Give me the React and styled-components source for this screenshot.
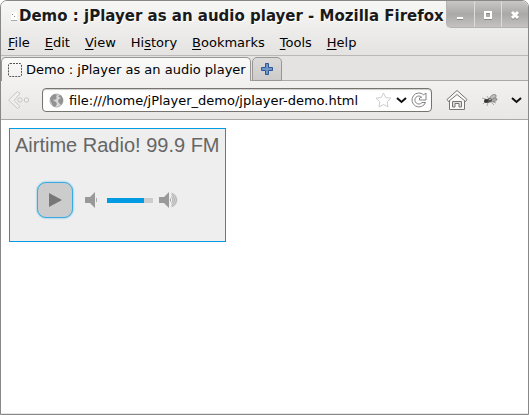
import React, { useState } from "react";
import styled, { createGlobalStyle } from "styled-components";

const GlobalStyle = createGlobalStyle`
  *, *::before, *::after { box-sizing: border-box; }
  body { margin: 0; background: #fff; }
  button, input { font: inherit; color: inherit; margin: 0; padding: 0; border: 0; background: none; }
  svg { display: block; }
`;

const Window = styled.div`
  display: flex;
  flex-direction: column;
  min-height: 100vh;
  border: 1px solid #888;
  border-radius: 7px 7px 0 0;
  overflow: hidden;
  background: #fff;
  color: #000;
  font: 13px/18px "DejaVu Sans", sans-serif;
`;

const Chrome = styled.header`
  background: linear-gradient(#f7f7f6, #e4e3e1);
  border-bottom: 1px solid #b9b8b6;
`;

const TitleBar = styled.div`
  display: flex;
  height: 30px;
`;

const WindowTitle = styled.h1`
  display: flex;
  align-items: center;
  flex: 1;
  min-width: 0;
  margin: 0;
  padding-left: 10px;
  gap: 2px;
  font-size: 15px;
  font-weight: bold;
  color: #1a1a1a;
  white-space: nowrap;
  text-shadow: 1px 1px 0 #fff;
`;

const WindowControls = styled.div`
  display: flex;
  flex: none;
  height: 27px;
  border: 1px solid #b4b3b1;
  border-width: 0 0 1px 1px;
  border-radius: 0 0 0 5px;
  overflow: hidden;
  background: linear-gradient(#c8c7c6, #aaa9a8 50%, #c3c2c1);
`;

const ControlButton = styled.button`
  display: grid;
  place-items: center;
  width: 27px;
  padding: 2px 1px 0 0;
  border-left: 1px solid #dddcdb;
  &:first-child { border-left: 0; padding-right: 2px; }
`;

const MenuBar = styled.nav`
  display: flex;
  align-items: center;
  gap: 15px;
  height: 24px;
  padding-left: 7px;
`;

const MenuButton = styled.button`
  white-space: nowrap;
  u { text-underline-offset: 2px; }
`;

const TabStrip = styled.div`
  display: flex;
  align-items: flex-end;
  gap: 1px;
  height: 25px;
  background: #e4e3e1;
  box-shadow: inset 0 -1px #aaa9a7;
`;

const Tab = styled.button`
  display: flex;
  align-items: center;
  gap: 4px;
  height: 24px;
  padding: 0 4px 0 6px;
  border: 1px solid #999795;
  border-bottom: 0;
  border-radius: 5px 5px 0 0;
  background: linear-gradient(#fafafa, #f2f1f0);
  white-space: nowrap;
`;

const NewTab = styled.button`
  display: grid;
  place-items: center;
  width: 30px;
  height: 24px;
  border: 1px solid #999795;
  border-radius: 5px 5px 0 0;
  background: linear-gradient(#dcdbda, #cccbca);
`;

const NavBar = styled.div`
  display: flex;
  align-items: center;
  height: 39px;
  padding: 0 6px;
  border-bottom: 1px solid #aca7a2;
  background: linear-gradient(#f2f1f0, #e8e7e6);
`;

const IconButton = styled.button`
  display: grid;
  place-items: center;
  flex: none;
  width: ${(p) => p.$width}px;
  height: 24px;
`;

const AddressBar = styled.div`
  display: flex;
  align-items: center;
  flex: 1;
  min-width: 0;
  height: 24px;
  margin: 0 12px 0 11px;
  padding: 0 3px 0 6px;
  border: 1px solid #77736f;
  border-radius: 4px;
  background: #fff;
  box-shadow: inset 0 1px 1px #ccc;
`;

const Address = styled.input`
  flex: 1;
  min-width: 0;
  height: 20px;
  padding-left: 5px;
  outline: 0;
`;

const Page = styled.main`
  flex: 1;
  display: flex;
  align-items: flex-start;
  padding: 8px;
  background: #fff;
  border-bottom: 1px solid #e6e5e4;
`;

const Player = styled.section`
  min-width: 217px;
  height: 114px;
  border: 1px solid #009be3;
  background: #eee;
  color: #666;
  font-family: "Liberation Sans", Arial, sans-serif;
`;

const Station = styled.h2`
  margin: 0;
  padding: 4px 5px 0;
  font-size: 20px;
  font-weight: normal;
  line-height: 25px;
  white-space: nowrap;
`;

const PlayerControls = styled.div`
  display: flex;
  align-items: center;
  padding: 24px 0 0 27px;
`;

const PlayButton = styled.button`
  display: grid;
  place-items: center;
  width: 36px;
  height: 36px;
  margin-right: 12px;
  border: 1px solid #39ace6;
  border-radius: 9px;
  background: #ccc;
  box-shadow: 0 0 2px #39ace6;
`;

const VolumeSlider = styled.input`
  appearance: none;
  width: 46px;
  height: 5px;
  margin: 0 6px 0 10px;
  background: linear-gradient(to right, #009be3 ${(p) => p.$level}%, #ccc ${(p) => p.$level}%);
  &::-webkit-slider-thumb { appearance: none; width: 1px; height: 5px; }
`;

const menus = [
  ["", "F", "ile"],
  ["", "E", "dit"],
  ["", "V", "iew"],
  ["Hi", "s", "tory"],
  ["", "B", "ookmarks"],
  ["", "T", "ools"],
  ["", "H", "elp"],
];

const DocumentIcon = () => (
  <svg width="6" height="9" viewBox="0 0 6 9" aria-hidden="true">
    <path d="M0 0h6v9H0z" fill="#fff" />
    <path d="M1 2h1v1H1zM3 4h1v1H3z" fill="#888" />
    <path d="M0 8h6v1H0z" fill="#aaa" />
  </svg>
);

const MinimizeIcon = () => (
  <svg width="10" height="10" viewBox="0 0 10 10" aria-hidden="true">
    <path d="M2 9.5h6" stroke="#888" />
    <path d="M2 8h6" stroke="#fff" strokeWidth="2" />
  </svg>
);

const MaximizeIcon = () => (
  <svg width="10" height="10" viewBox="0 0 10 10" fill="none" aria-hidden="true">
    <path d="M2 3h6v6H2z" stroke="#8b8a89" strokeWidth="2" />
    <path d="M2 2h6v6H2z" stroke="#fff" strokeWidth="2" />
  </svg>
);

const CloseIcon = () => (
  <svg width="10" height="10" viewBox="0 0 10 10" fill="none" aria-hidden="true">
    <path d="m2 3 6 6m0-6L2 9" stroke="#8b8a89" strokeWidth="3" />
    <path d="m2 2 6 6m0-6L2 8" stroke="#fff" strokeWidth="3" />
  </svg>
);

const BlankPageIcon = () => (
  <svg width="14" height="14" viewBox="0 0 14 14" fill="none" aria-hidden="true">
    <rect x=".5" y=".5" width="13" height="13" rx="1.5" stroke="#555" strokeDasharray="2 1" />
  </svg>
);

const PlusIcon = () => (
  <svg width="14" height="14" viewBox="0 0 14 14" aria-hidden="true">
    <path
      d="M5.5 1.5h3v4h4v3h-4v4h-3v-4h-4v-3h4z"
      fill="#6f95c9"
      stroke="#2c5896"
      strokeLinejoin="round"
    />
  </svg>
);

const BackIcon = () => (
  <svg width="24" height="20" viewBox="0 0 24 20" fill="#f0efee" stroke="#c6c5c4" aria-hidden="true">
    <path d="M10.5 1.500 1.500 10l9 8.500 2.500-2L7 10.500l6-7z" strokeLinejoin="round" />
    <circle cx="13" cy="10" r="2.200" />
    <circle cx="19.500" cy="10" r="2.200" />
  </svg>
);

const GlobeIcon = () => (
  <svg width="15" height="15" viewBox="0 0 15 15" aria-hidden="true">
    <circle cx="7.5" cy="7.5" r="6.5" fill="#d6d6d6" stroke="#b2b2b2" />
    <path
      d="M1 6q1-4 5-5l2 1-1 2 1 1-2 2-2-1 1 2 2 1 1 2-2 3-2-1-2-4zM9 3l3-1 2 4v3l-2 3-2-2-1-2 1-2 2-1-2-1z"
      fill="#929292"
    />
  </svg>
);

const StarIcon = () => (
  <svg width="17" height="16" viewBox="0 0 17 16" fill="#fff" stroke="#ccc" aria-hidden="true">
    <path d="m8.5 1 2.200 4.600 5.300.6-3.900 3.600 1 5.200-4.600-2.500L3.900 15l1-5.200L1 6.200l5.300-.6z" strokeLinejoin="round" />
  </svg>
);

const ChevronIcon = () => (
  <svg width="11" height="7" viewBox="0 0 11 7" fill="none" stroke="#111" strokeWidth="2" aria-hidden="true">
    <path d="m1 1 4.500 4L10 1" />
  </svg>
);

const ReloadIcon = () => (
  <svg width="16" height="16" viewBox="0 0 16 16" aria-hidden="true">
    <path
      d="M15 1v7H8.500V6l2.200-.8A4 4 0 1 0 11 10.500h3.500A7 7 0 1 1 12.700 2.800z"
      fill="#fff"
      stroke="#858483"
      strokeLinejoin="round"
    />
  </svg>
);

const HomeIcon = () => (
  <svg width="22" height="22" viewBox="0 0 22 22" stroke="#777674" strokeLinejoin="round" aria-hidden="true">
    <path d="M3.500 10v10.500h15V10L11 4z" fill="#fafafa" />
    <path d="M6.500 18v-5.500h9V18H13v-3.500H9V18z" fill="#dededd" />
    <path d="M11 1.500 1 10.500l1.500 2L11 5.500l8.500 7 1.500-2z" fill="#f7f7f6" />
  </svg>
);

const FlyIcon = () => (
  <svg width="18" height="14" viewBox="0 0 18 14" fill="none" aria-hidden="true">
    <path d="m1 5 4 1M2 11l3-3m1 5 1-4m4 1 2 2m-1-3 3 1M6 3l2 3" stroke="#aaa" />
    <path d="M8 6q3-6 7-4 1 3-5 5z" fill="#bcbcbc" stroke="#777" strokeWidth=".7" />
    <path d="M9 8q6-5 7-2 0 3-7 3z" fill="#aaa" stroke="#777" strokeWidth=".7" />
    <ellipse cx="8" cy="7.5" rx="3" ry="2" transform="rotate(-18 8 7.5)" fill="#555" />
    <circle cx="5" cy="8" r="2" fill="#333" />
    <path d="M8 6h2v1H8z" fill="#aaa" />
  </svg>
);

const PlayIcon = () => (
  <svg width="13" height="14" viewBox="0 0 13 14" aria-hidden="true">
    <path d="M0 0v14l13-7z" fill="#777" />
  </svg>
);

const SpeakerIcon = () => (
  <svg width="12" height="16" viewBox="0 0 12 16" aria-hidden="true">
    <path d="M0 5h5l5-5v16l-5-5H0z" fill="#999" />
    <path d="M11 6v4h1V6z" fill="#aaa" />
  </svg>
);

const LoudIcon = () => (
  <svg width="19" height="16" viewBox="0 0 19 16" fill="none" aria-hidden="true">
    <path d="M0 5h5l5-5v16l-5-5H0z" fill="#999" />
    <path d="M11 6q2 2 0 4z" fill="#999" />
    <path d="M12 1q6 0 6.500 7-.5 7-6.500 7l1-4q2-3 0-6z" fill="#d4d4d4" />
    <path d="M12.500 4.500q3 3.500 0 7M13 2.500q5 5.500 0 11M13 .8q9 7.200 0 14.400" stroke="#b4b4b4" />
  </svg>
);

export default function App() {
  const [address, setAddress] = useState("file:///home/jPlayer_demo/jplayer-demo.html");
  const [volume, setVolume] = useState(80);

  return (
    <>
      <GlobalStyle />
      <Window>
        <Chrome>
          <TitleBar>
            <WindowTitle>
              <DocumentIcon />
              Demo : jPlayer as an audio player - Mozilla Firefox
            </WindowTitle>
            <WindowControls>
              <ControlButton aria-label="Minimize"><MinimizeIcon /></ControlButton>
              <ControlButton aria-label="Maximize"><MaximizeIcon /></ControlButton>
              <ControlButton aria-label="Close"><CloseIcon /></ControlButton>
            </WindowControls>
          </TitleBar>
          <MenuBar aria-label="Menu">
            {menus.map(([before, key, after]) => (
              <MenuButton key={before + key}>{before}<u>{key}</u>{after}</MenuButton>
            ))}
          </MenuBar>
        </Chrome>
        <TabStrip role="tablist">
          <Tab role="tab" aria-selected="true">
            <BlankPageIcon />
            Demo : jPlayer as an audio player
          </Tab>
          <NewTab aria-label="Open a new tab"><PlusIcon /></NewTab>
        </TabStrip>
        <NavBar>
          <IconButton $width={24} aria-label="Back"><BackIcon /></IconButton>
          <AddressBar>
            <GlobeIcon />
            <Address aria-label="Address" value={address} onChange={(e) => setAddress(e.target.value)} />
            <IconButton $width={18} aria-label="Bookmark this page"><StarIcon /></IconButton>
            <IconButton $width={18} aria-label="Show history"><ChevronIcon /></IconButton>
            <IconButton $width={18} aria-label="Reload"><ReloadIcon /></IconButton>
          </AddressBar>
          <IconButton $width={26} aria-label="Home"><HomeIcon /></IconButton>
          <IconButton $width={40} aria-label="Firebug"><FlyIcon /></IconButton>
          <IconButton $width={12} aria-label="More tools"><ChevronIcon /></IconButton>
        </NavBar>
        <Page>
          <Player>
            <Station>Airtime Radio! 99.9 FM</Station>
            <PlayerControls>
              <PlayButton aria-label="Play"><PlayIcon /></PlayButton>
              <button aria-label="Mute"><SpeakerIcon /></button>
              <VolumeSlider
                type="range"
                aria-label="Volume"
                value={volume}
                $level={volume}
                onChange={(e) => setVolume(Number(e.target.value))}
              />
              <button aria-label="Maximum volume"><LoudIcon /></button>
            </PlayerControls>
          </Player>
        </Page>
      </Window>
    </>
  );
}
